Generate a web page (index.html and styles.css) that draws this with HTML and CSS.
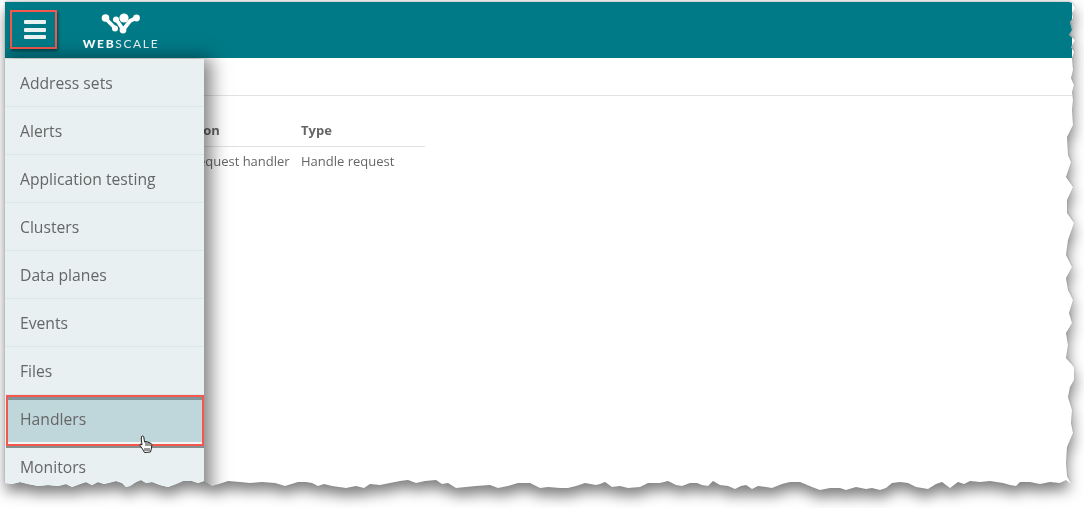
FILE: index.html
```html
<!DOCTYPE html>
<html lang="en">
<head>
<meta charset="utf-8">
<title>Webscale Handlers</title>
<link rel="stylesheet" href="styles.css">
</head>
<body>
<div class="shadow">
  <div class="sheet">
    <header class="topbar">
      <button class="burger" aria-label="Menu"><span></span><span></span><span></span></button>
      <div class="logo">
        <svg class="logo-mark" width="40" height="22" viewBox="0 0 40 22" aria-hidden="true">
          <g fill="none" stroke="#fff" stroke-width="3.8" stroke-linecap="round" stroke-linejoin="round">
            <path d="M4 5 L9 10 L14.500 15.500"/>
            <path d="M15 6 L22 16.500"/>
            <path d="M35 5 L29 8 L22 17"/>
          </g>
          <g fill="#fff">
            <circle cx="4.500" cy="5" r="3.800"/>
            <circle cx="15" cy="6.500" r="3"/>
            <circle cx="23" cy="5" r="4.600"/>
            <circle cx="35.500" cy="5" r="3.400"/>
            <circle cx="14" cy="15.500" r="3"/>
            <circle cx="22" cy="17" r="3.400"/>
          </g>
        </svg>
        <div class="logo-word"><b>WEB</b>SCALE</div>
      </div>
    </header>
    <div class="titlebar"></div>
    <div class="table">
      <div class="th">Description</div>
      <div class="th">Type</div>
      <div class="td">Default request handler</div>
      <div class="td">Handle request</div>
    </div>
    <nav class="menu">
      <a class="item">Address sets</a>
      <a class="item">Alerts</a>
      <a class="item">Application testing</a>
      <a class="item">Clusters</a>
      <a class="item">Data planes</a>
      <a class="item">Events</a>
      <a class="item">Files</a>
      <a class="item selected">Handlers</a>
      <a class="item">Monitors</a>
    </nav>
    <svg class="cursor" width="14" height="19" viewBox="0 0 14 19" aria-hidden="true">
      <path d="M2.500 1.500 C3.500 .5 4.500 1 4.800 2 L5.500 7 L7 6.500 L8.500 7 L10 7.500 L11.500 8 L12.800 9.500 L12.500 13 L11.500 17 L5.500 17.500 L3.500 14 L1 10.500 L1.500 9 L3 10 L2.300 4 Z" fill="#fff" stroke="#222" stroke-width="1"/>
      <path d="M7 7 V11 M9 7.500 V11 M11 8 V11 M6 13 V16 M8 13 V16 M10 13 V16" stroke="#333" stroke-width="1" fill="none"/>
    </svg>
  </div>
</div>
</body>
</html>
```
FILE: styles.css
```css
* { box-sizing: border-box; }
html, body { margin: 0; padding: 0; background: #fff; }
body { width: 1084px; height: 508px; overflow: hidden; font-family: "Open Sans", "Liberation Sans", sans-serif; }

.shadow {
  width: 1084px;
  height: 508px;
  filter: drop-shadow(0 -1px 1px rgba(0,0,0,.18)) drop-shadow(1px 8px 7px rgba(0,0,0,.5));
}
.sheet {
  position: relative;
  width: 1084px;
  height: 508px;
  padding: 2px 12px 0 5px;
  background: #fff;
  overflow: hidden;
  clip-path: polygon(5px 2px, 1069px 2px, 1072px 3px, 1075px 8px, 1072px 13px, 1073px 18px, 1070px 22px, 1072px 30px, 1069px 35px, 1075px 40px, 1071px 47px, 1074px 52px, 1072px 58px, 1073px 70px, 1071px 78px, 1074px 85px, 1072px 92px, 1073px 100px, 1072px 110px, 1073px 125px, 1067px 137px, 1068px 155px, 1071px 162px, 1066px 177px, 1073px 187px, 1067px 200px, 1067px 213px, 1074px 223px, 1068px 240px, 1066px 255px, 1072px 267px, 1066px 278px, 1068px 290px, 1073px 300px, 1069px 313px, 1072px 323px, 1066px 333px, 1068px 345px, 1066px 358px, 1074px 367px, 1074px 380px, 1070px 387px, 1068px 397px, 1072px 410px, 1071px 423px, 1073px 433px, 1067px 447px, 1066px 463px, 1067px 476px, 1071px 484px, 1066px 480px, 1060px 483px, 1050px 482px, 1040px 484px, 1030px 482px, 1020px 482px, 1016px 486px, 1010px 485px, 1003px 483px, 990px 481px, 980px 482px, 970px 481px, 964px 484px, 958px 482px, 950px 488px, 942px 482px, 936px 484px, 928px 489px, 922px 488px, 916px 487px, 908px 483px, 900px 482px, 892px 483px, 886px 488px, 880px 490px, 872px 488px, 866px 489px, 856px 487px, 846px 490px, 840px 488px, 830px 488px, 820px 490px, 812px 487px, 800px 482px, 790px 482px, 782px 484px, 772px 488px, 766px 487px, 758px 486px, 752px 489px, 746px 485px, 741px 486px, 735px 489px, 728px 486px, 720px 485px, 713px 481px, 708px 486px, 702px 485px, 697px 483px, 690px 483px, 682px 486px, 676px 485px, 668px 481px, 660px 483px, 648px 483px, 640px 487px, 628px 488px, 620px 486px, 612px 487px, 605px 482px, 600px 484px, 596px 485px, 585px 483px, 576px 486px, 568px 488px, 560px 488px, 548px 487px, 540px 488px, 530px 483px, 518px 483px, 508px 486px, 498px 488px, 490px 485px, 476px 486px, 466px 487px, 456px 488px, 448px 483px, 442px 484px, 436px 480px, 425px 481px, 416px 483px, 408px 480px, 400px 481px, 390px 483px, 380px 485px, 370px 484px, 364px 488px, 356px 486px, 346px 488px, 332px 486px, 324px 484px, 318px 486px, 312px 483px, 306px 482px, 298px 482px, 285px 486px, 275px 483px, 262px 482px, 250px 483px, 240px 482px, 228px 481px, 222px 483px, 212px 486px, 204px 481px, 198px 483px, 192px 481px, 183px 481px, 176px 484px, 168px 487px, 160px 485px, 152px 482px, 146px 483px, 141px 480px, 136px 482px, 130px 486px, 126px 487px, 122px 483px, 116px 481px, 104px 484px, 98px 482px, 92px 485px, 86px 482px, 80px 484px, 72px 487px, 66px 484px, 58px 486px, 48px 485px, 38px 486px, 28px 484px, 20px 482px, 12px 484px, 5px 483px);
}

.topbar {
  display: flex;
  align-items: flex-start;
  height: 56px;
  padding: 8px 0 0 5px;
  background: #007a87;
}
.burger {
  display: flex;
  flex-direction: column;
  justify-content: center;
  gap: 3.500px;
  width: 47px;
  height: 39px;
  padding: 0 9px 0 12px;
  background: transparent;
  border: 2px solid #f4584c;
  box-shadow: 1px 2px 3px rgba(0,0,0,.45);
}
.burger span {
  display: block;
  height: 4px;
  border-radius: 1px;
  background: #e9f1f2;
}
.logo {
  display: flex;
  flex-direction: column;
  align-items: center;
  width: 76px;
  margin: 3px 0 0 26px;
}
.logo-mark { display: block; }
.logo-word {
  margin-top: 2px;
  font-family: "Lato", "Liberation Sans", sans-serif;
  font-size: 12px;
  line-height: 14px;
  letter-spacing: 1.650px;
  color: #e9f1f2;
  white-space: nowrap;
}
.logo-word b { font-weight: 900; color: #fff; }

.titlebar {
  height: 38px;
  border-bottom: 1px solid #e2e2e2;
}

.table {
  display: grid;
  grid-template-columns: 156px 124px;
  margin: 19px 0 0 140px;
  width: 280px;
  font-size: 13px;
  color: #666;
}
.th {
  height: 32px;
  padding-top: 7px;
  line-height: 17px;
  font-weight: 700;
  border-bottom: 1px solid #e2e2e2;
}
.td {
  padding-top: 6px;
  line-height: 17px;
}

.menu {
  position: absolute;
  top: 59px;
  left: 5px;
  width: 199px;
  height: 449px;
  overflow: hidden;
  background: #e8f0f2;
  box-shadow: 4px 2px 17px 3px rgba(0,0,0,.5);
}
.item {
  display: flex;
  align-items: center;
  height: 48px;
  padding-left: 15px;
  padding-top: 1px;
  font-size: 15.700px;
  color: #666;
  border-bottom: 1px solid #dde6e8;
}
.selected {
  position: relative;
  height: 51px;
  margin: 0 0 -3px 1px;
  padding-top: 0;
  padding-left: 12px;
  padding-bottom: 3px;
  background: #bfd6da;
  border: 2px solid #f4584c;
  box-shadow: inset 0 3px 0 #7f9599, inset 0 -2px 0 #f2f6f7, 0 2px 0 #868e90;
}
.cursor {
  position: absolute;
  top: 435px;
  left: 139px;
}
```
